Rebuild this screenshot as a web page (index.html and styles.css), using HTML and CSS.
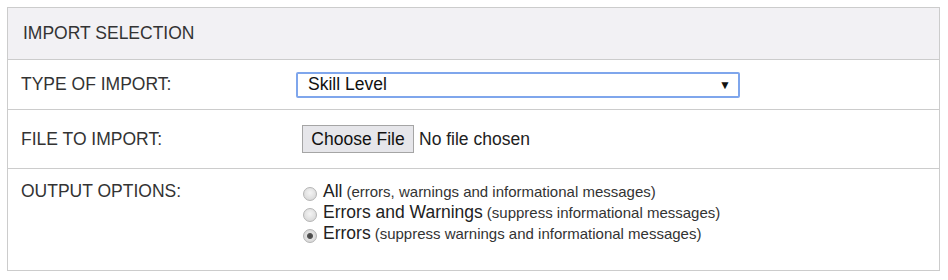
FILE: index.html
```html
<!DOCTYPE html>
<html lang="en">
<head>
    <meta charset="UTF-8">
    <title>Import Selection</title>
    <link rel="stylesheet" href="styles.css">
</head>
<body>
    <div class="panel">
        <div class="panel-head">IMPORT SELECTION</div>
        <div class="row">
            <div class="label">TYPE OF IMPORT:</div>
            <div class="field">
                <div class="select">
                    <span>Skill Level</span>
                    <span class="arrow">&#9660;</span>
                </div>
            </div>
        </div>
        <div class="row row-file">
            <div class="label">FILE TO IMPORT:</div>
            <div class="field">
                <span class="file-button">Choose File</span>
                <span class="file-name">No file chosen</span>
            </div>
        </div>
        <div class="row row-options">
            <div class="label">OUTPUT OPTIONS:</div>
            <div class="field options">
                <div class="option"><span class="radio"></span><span class="opt-main">All</span> <span class="opt-note">(errors, warnings and informational messages)</span></div>
                <div class="option"><span class="radio"></span><span class="opt-main">Errors and Warnings</span> <span class="opt-note">(suppress informational messages)</span></div>
                <div class="option"><span class="radio checked"></span><span class="opt-main">Errors</span> <span class="opt-note">(suppress warnings and informational messages)</span></div>
            </div>
        </div>
    </div>
</body>
</html>
```

FILE: styles.css
```css
body {
    margin: 7px;
    font-family: 'Liberation Sans', Arial, sans-serif;
    color: #333;
    background: #fff;
}
.panel {
    width: 931px;
    border: 1px solid #ccc;
}
.panel-head {
    height: 51px;
    line-height: 51px;
    padding-left: 15px;
    font-size: 17.5px;
    background: #f2f1f4;
    border-bottom: 1px solid #ccc;
}
.row {
    display: flex;
    align-items: center;
    height: 49px;
    border-top: 1px solid #ccc;
}
.panel-head + .row {
    border-top: none;
}
.label {
    width: 275px;
    padding-left: 13px;
    font-size: 17.5px;
}
.field {
    flex: 1;
    display: flex;
    align-items: center;
}
.select {
    display: flex;
    justify-content: space-between;
    align-items: center;
    box-sizing: border-box;
    width: 444px;
    height: 26px;
    padding: 0 7px 0 10px;
    border: 2px solid #7fa6ec;
    border-radius: 2px;
    font-size: 17.5px;
    color: #111;
}
.arrow {
    font-size: 12px;
    color: #111;
}
.row-file {
    height: 58px;
}
.file-button {
    box-sizing: border-box;
    margin-left: 6px;
    width: 112px;
    height: 28px;
    line-height: 26px;
    text-align: center;
    font-size: 17.5px;
    color: #111;
    background: #e6e6ea;
    border: 1px solid #a5a5a5;
}
.file-name {
    margin-left: 5px;
    font-size: 17.5px;
    color: #222;
}
.row-options {
    height: 101px;
    align-items: flex-start;
}
.row-options .label {
    padding-top: 12px;
}
.options {
    flex-direction: column;
    align-items: flex-start;
    padding-top: 12px;
}
.option {
    display: flex;
    align-items: center;
    height: 21px;
}
.radio {
    box-sizing: border-box;
    width: 14px;
    height: 14px;
    margin: 4px 6px 0 7px;
    border: 1px solid #b4b4b4;
    border-radius: 50%;
    background: radial-gradient(circle at 50% 40%, #f4f4f4, #d2d2d2);
}
.radio.checked {
    background: radial-gradient(circle, #444 0, #555 2.5px, #e2e2e2 3.5px, #d0d0d0 100%);
}
.opt-main {
    font-size: 17.5px;
    color: #222;
}
.opt-note {
    margin-left: 4px;
    font-size: 15px;
    color: #333;
}
```
